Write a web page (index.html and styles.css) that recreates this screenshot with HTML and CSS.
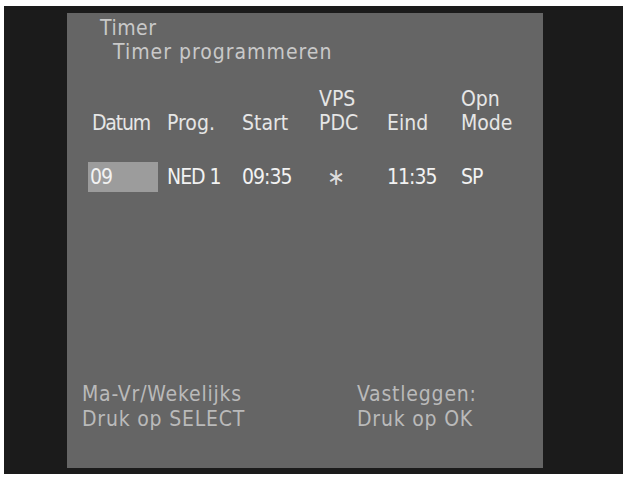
FILE: index.html
```html
<!DOCTYPE html>
<html>
<head>
<meta charset="utf-8">
<link rel="stylesheet" href="styles.css">
</head>
<body>
<div class="frame">
  <div class="screen">
    <div class="title">Timer</div>
    <div class="subtitle">Timer programmeren</div>
    <div class="grid head">
      <div class="c"><br><span class="tight">Datum</span></div>
      <div class="c"><br>Prog.</div>
      <div class="c"><br>Start</div>
      <div class="c">VPS<br>PDC</div>
      <div class="c"><br>Eind</div>
      <div class="c">Opn<br>Mode</div>
    </div>
    <div class="grid row">
      <div class="c"><span class="sel">09</span></div>
      <div class="c">NED 1</div>
      <div class="c">09:35</div>
      <div class="c star">∗</div>
      <div class="c">11:35</div>
      <div class="c">SP</div>
    </div>
    <div class="foot">
      <div>Ma-Vr/Wekelijks<br>Druk op SELECT</div>
      <div>Vastleggen:<br>Druk op OK</div>
    </div>
  </div>
</div>
</body>
</html>
```
FILE: styles.css
```css
html, body {
  margin: 0;
  padding: 0;
  background: #ffffff;
}
body {
  font-family: "DejaVu Sans Condensed", "DejaVu Sans", sans-serif;
  font-size: 21px;
  line-height: 24px;
}
.frame {
  margin: 6px 0 0 4px;
  width: 619px;
  height: 468px;
  box-sizing: border-box;
  padding: 7px 0 0 63px;
  background: #1b1b1b;
}
.screen {
  width: 476px;
  height: 455px;
  box-sizing: border-box;
  padding: 3px 0 36px 0;
  background: #656565;
  display: flex;
  flex-direction: column;
}
.title {
  color: #c9c9c9;
  padding-left: 33px;
  letter-spacing: 0.5px;
}
.subtitle {
  color: #c9c9c9;
  padding-left: 46px;
  letter-spacing: 1px;
}
.grid {
  display: grid;
  grid-template-columns: 75px 75px 77px 68px 74px 60px;
  padding-left: 25px;
}
.head {
  margin-top: 23px;
  color: #e6e6e6;
}
.tight {
  letter-spacing: -1.2px;
}
.row {
  margin-top: 27px;
  line-height: 30px;
  color: #f2f2f2;
  letter-spacing: -1px;
}
.sel {
  display: inline-block;
  width: 68px;
  margin-left: -4px;
  padding-left: 2px;
  background: #9c9c9c;
}
.star {
  padding-left: 8px;
  font-size: 24px;
  color: #dcdcdc;
}
.foot {
  margin-top: auto;
  display: grid;
  grid-template-columns: 275px 1fr;
  padding-left: 15px;
  line-height: 25px;
  color: #bababa;
  letter-spacing: 0.8px;
}
```
